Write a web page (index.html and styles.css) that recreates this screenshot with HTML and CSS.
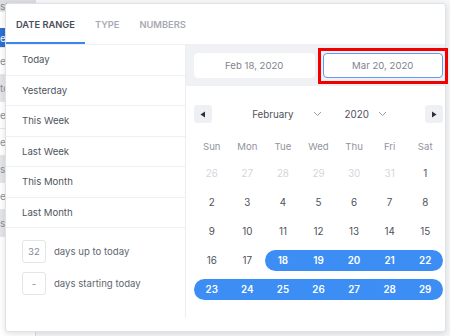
FILE: index.html
```html
<!DOCTYPE html>
<html lang="en">
<head>
    <meta charset="UTF-8">
    <meta name="viewport" content="width=device-width, initial-scale=1.0">
    <title>Date range picker</title>
    <link rel="stylesheet" href="styles.css">
</head>
<body>
    <div class="backdrop">
        <div class="side">
            <div class="side-item top">st</div>
            <div class="side-item active">es</div>
            <div class="side-item">e/</div>
            <div class="side-item grey">tc</div>
            <div class="side-item">e/</div>
            <div class="side-item">e/</div>
            <div class="side-item grey">s</div>
            <div class="side-item">e/</div>
            <div class="side-item grey">s</div>
        </div>
    </div>

    <div class="picker">
        <div class="tabs">
            <div class="tab active">DATE RANGE</div>
            <div class="tab">TYPE</div>
            <div class="tab">NUMBERS</div>
        </div>

        <div class="picker-body">
            <div class="presets">
                <div class="preset">Today</div>
                <div class="preset">Yesterday</div>
                <div class="preset">This Week</div>
                <div class="preset">Last Week</div>
                <div class="preset">This Month</div>
                <div class="preset">Last Month</div>

                <div class="custom">
                    <div class="custom-row">
                        <div class="num-box">32</div>
                        <span>days up to today</span>
                    </div>
                    <div class="custom-row">
                        <div class="num-box">-</div>
                        <span>days starting today</span>
                    </div>
                </div>
            </div>

            <div class="calendar">
                <div class="range-inputs">
                    <div class="date-input">Feb 18, 2020</div>
                    <div class="date-input focused">Mar 20, 2020</div>
                </div>

                <div class="month-nav">
                    <button class="nav-btn">
                        <svg width="6" height="7" viewBox="0 0 6 7"><path d="M5 0.5 L0.5 3.5 L5 6.5 Z" fill="#2b2f38"/></svg>
                    </button>
                    <div class="selects">
                        <span class="select month">February
                            <svg width="9" height="6" viewBox="0 0 9 6"><path d="M1 1 L4.5 4.5 L8 1" fill="none" stroke="#9a9ea8" stroke-width="1"/></svg>
                        </span>
                        <span class="select">2020
                            <svg width="9" height="6" viewBox="0 0 9 6"><path d="M1 1 L4.5 4.5 L8 1" fill="none" stroke="#9a9ea8" stroke-width="1"/></svg>
                        </span>
                    </div>
                    <button class="nav-btn">
                        <svg width="6" height="7" viewBox="0 0 6 7"><path d="M1 0.5 L5.5 3.5 L1 6.5 Z" fill="#2b2f38"/></svg>
                    </button>
                </div>

                <div class="weekdays">
                    <span>Sun</span><span>Mon</span><span>Tue</span><span>Wed</span><span>Thu</span><span>Fri</span><span>Sat</span>
                </div>

                <div class="days">
                    <div class="day muted"><span>26</span></div>
                    <div class="day muted"><span>27</span></div>
                    <div class="day muted"><span>28</span></div>
                    <div class="day muted"><span>29</span></div>
                    <div class="day muted"><span>30</span></div>
                    <div class="day muted"><span>31</span></div>
                    <div class="day"><span>1</span></div>

                    <div class="day"><span>2</span></div>
                    <div class="day"><span>3</span></div>
                    <div class="day"><span>4</span></div>
                    <div class="day"><span>5</span></div>
                    <div class="day"><span>6</span></div>
                    <div class="day"><span>7</span></div>
                    <div class="day"><span>8</span></div>

                    <div class="day"><span>9</span></div>
                    <div class="day"><span>10</span></div>
                    <div class="day"><span>11</span></div>
                    <div class="day"><span>12</span></div>
                    <div class="day"><span>13</span></div>
                    <div class="day"><span>14</span></div>
                    <div class="day"><span>15</span></div>

                    <div class="day"><span>16</span></div>
                    <div class="day"><span>17</span></div>
                    <div class="day in-range start"><span>18</span></div>
                    <div class="day in-range"><span>19</span></div>
                    <div class="day in-range"><span>20</span></div>
                    <div class="day in-range"><span>21</span></div>
                    <div class="day in-range end"><span>22</span></div>

                    <div class="day in-range start"><span>23</span></div>
                    <div class="day in-range"><span>24</span></div>
                    <div class="day in-range"><span>25</span></div>
                    <div class="day in-range"><span>26</span></div>
                    <div class="day in-range"><span>27</span></div>
                    <div class="day in-range"><span>28</span></div>
                    <div class="day in-range end"><span>29</span></div>
                </div>
            </div>
        </div>
    </div>

    <div class="highlight"></div>
</body>
</html>
```

FILE: styles.css
```css
* {
    margin: 0;
    padding: 0;
    box-sizing: border-box;
}

body {
    width: 450px;
    height: 336px;
    overflow: hidden;
    position: relative;
    background: #f5f6f8;
    font-family: Inter, "Noto Sans", sans-serif;
    color: #4d515a;
}

/* page behind the popup */
.backdrop {
    height: 100%;
    display: flex;
}

.side {
    width: 36px;
    height: 100%;
    background: #fff;
    border-right: 1px solid #d9dce1;
}

.side-item {
    height: 27px;
    font-size: 10px;
    line-height: 27px;
    color: #8a8e96;
    text-align: right;
    padding-right: 31px;
    border-bottom: 1px solid #e6e8ec;
}

.side-item.top {
    height: 12px;
    line-height: 12px;
    background: #dcdde0;
    margin-bottom: 16px;
}

.side-item.active {
    background: #2f6fd1;
    color: #fff;
    height: 20px;
    line-height: 20px;
}

.side-item.grey {
    background: #e4e5e8;
}

/* popup */
.picker {
    position: absolute;
    left: 5px;
    top: 3px;
    width: 441px;
    height: 329px;
    background: #fff;
    border: 1px solid #dfe1e5;
    border-radius: 3px;
    box-shadow: 0 2px 6px rgba(0, 0, 0, 0.12);
    display: flex;
    flex-direction: column;
    padding-bottom: 13px;
}

.tabs {
    display: flex;
    height: 41px;
    border-bottom: 1px solid #eef0f3;
}

.tab {
    padding: 0 10px;
    font-size: 9.3px;
    font-weight: 600;
    color: #a7aab1;
    line-height: 41px;
    border-bottom: 2px solid transparent;
}

.tab.active {
    color: #4a4e58;
    border-bottom-color: #3a86f0;
}

.picker-body {
    flex: 1;
    display: flex;
}

.presets {
    width: 180px;
    border-right: 1px solid #eceef2;
}

.preset {
    height: 30.5px;
    padding-left: 16px;
    font-size: 9.6px;
    line-height: 29.5px;
    color: #50545d;
    border-bottom: 1px solid #eef0f4;
}

.custom {
    padding: 12px 16px;
    display: flex;
    flex-direction: column;
    gap: 9px;
}

.custom-row {
    display: flex;
    align-items: center;
    gap: 8px;
    font-size: 9.6px;
    color: #62666f;
}

.num-box {
    width: 24px;
    height: 23px;
    border: 1px solid #e3e5ea;
    border-radius: 3px;
    text-align: center;
    line-height: 21px;
    color: #868a92;
    font-size: 9.6px;
}

.calendar {
    flex: 1;
}

.range-inputs {
    display: flex;
    gap: 8px;
    padding: 8px 2px 8px 8px;
    background: #eff1f5;
}

.date-input {
    height: 25px;
    flex: 1;
    background: #fff;
    border: 1px solid #fff;
    border-radius: 4px;
    text-align: center;
    font-size: 9.6px;
    line-height: 23px;
    color: #80848d;
}

.date-input.focused {
    border-color: #5d9ef2;
}

.month-nav {
    display: flex;
    align-items: center;
    justify-content: space-between;
    margin: 19px 2px 0 8px;
}

.nav-btn {
    width: 18px;
    height: 18px;
    border: none;
    border-radius: 3px;
    background: #eef0f4;
    display: flex;
    align-items: center;
    justify-content: center;
}

.selects {
    display: flex;
    gap: 23px;
    margin-left: 2px;
}

.select {
    display: flex;
    align-items: center;
    gap: 9px;
    font-size: 9.8px;
    color: #4d515a;
}

.select.month {
    gap: 19px;
}

.weekdays,
.days {
    display: grid;
    grid-template-columns: repeat(7, 1fr);
    width: 249px;
    margin-left: 8px;
}

.weekdays {
    margin-top: 10px;
    height: 26px;
    align-items: center;
    text-align: center;
    font-size: 9.6px;
    color: #90949c;
}

.day {
    height: 29px;
    display: flex;
    align-items: center;
    font-size: 9.8px;
    color: #4d515a;
}

.day span {
    width: 100%;
    height: 21px;
    line-height: 21px;
    text-align: center;
}

.day.muted {
    color: #d3d6dc;
}

.day.in-range span {
    background: #3d8ef4;
    color: #fff;
    font-weight: 600;
}

.day.start span {
    border-radius: 11px 0 0 11px;
}

.day.end span {
    border-radius: 0 11px 11px 0;
}

/* annotation box drawn over the end date */
.highlight {
    position: absolute;
    left: 318px;
    top: 48px;
    width: 130px;
    height: 36px;
    border: 3px solid #f20000;
}
```
